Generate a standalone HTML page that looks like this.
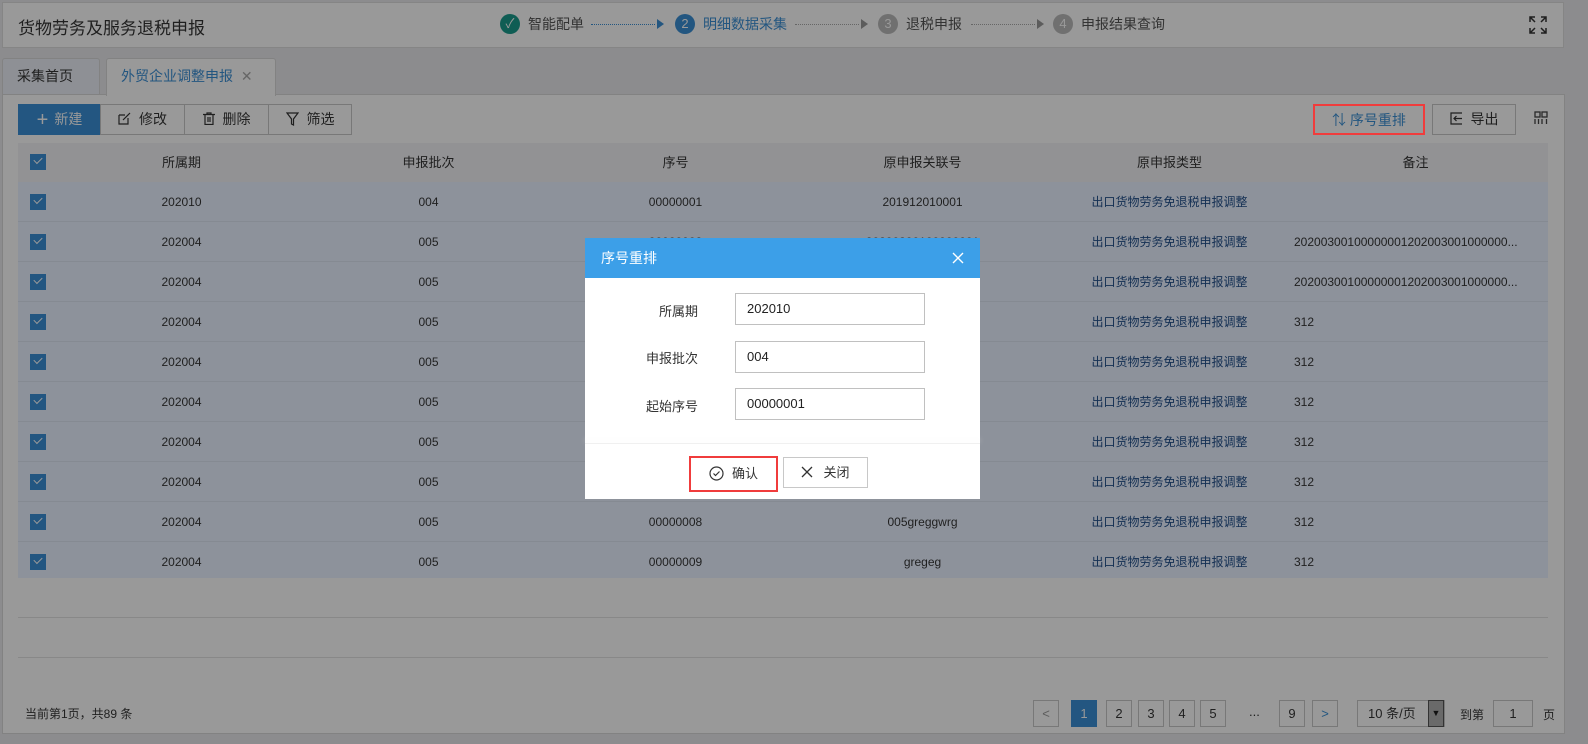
<!DOCTYPE html>
<html><head><meta charset="utf-8"><style>
*{box-sizing:border-box;margin:0;padding:0}
body{width:1588px;height:744px;position:relative;overflow:hidden;background:#8c8c8e;font-family:"Liberation Sans","Noto Sans CJK SC",sans-serif;font-size:12px;color:#1f1f1f}
.a{position:absolute}
.hdr{left:2px;top:2px;width:1562px;height:46px;background:#999;border:1px solid #858585}
.step{top:14px;height:20px;line-height:20px;font-size:14px;color:#333}
.circ{display:inline-block;width:20px;height:20px;border-radius:50%;color:#999;text-align:center;font-size:13px;line-height:20px;vertical-align:top;margin-right:8px}
.dots{top:24px;border-top:1px dotted #235680;width:64px}
.tab{top:58px;height:37px;border:1px solid #828282;border-bottom:none;background:#8e9095;font-size:14px;line-height:34px;padding:0 14px;border-radius:3px 3px 0 0}
.panel{left:2px;top:94px;width:1563px;height:640px;background:#999;border:1px solid #828282}
.btn{top:104px;height:31px;border:1px solid #787878;background:#999;font-size:14px;line-height:29px;text-align:center;color:#1f1f1f}
.th{top:143px;height:39px;left:18px;width:1530px;background:#929294}
.cell{position:absolute;text-align:center;width:247px;line-height:40px;height:40px}
.row{position:absolute;left:18px;width:1530px;height:40px;background:#8d929b;border-bottom:1px solid #858a92}
.cb{position:absolute;left:12px;top:12px;width:16px;height:16px;background:#235681}
.cb:after{content:"";position:absolute;left:4px;top:3px;width:7px;height:4px;border-left:1.5px solid #999;border-bottom:1.5px solid #999;transform:rotate(-45deg)}
.pg{top:700px;width:26px;height:27px;border:1px solid #787878;background:#999;text-align:center;line-height:25px;font-size:13px}
.dlg{left:585px;top:238px;width:395px;height:261px;background:#fff;color:#333}
.lbl{width:113px;text-align:right;font-size:13px;left:0}
.inp{left:150px;width:190px;height:32px;border:1px solid #c0c0c0;line-height:30px;padding-left:11px;font-size:13px;color:#222}
</style></head><body>
<div class="a hdr"></div>
<div class="a" style="left:18px;top:14px;font-size:17px;color:#1f1f1f">货物劳务及服务退税申报</div>
<div class="a step" style="left:500px"><span class="circ" style="background:#0f5d54">✓</span>智能配单</div>
<div class="a dots" style="left:591px"></div><div class="a" style="left:657px;top:19px;border-left:7px solid #235680;border-top:5px solid transparent;border-bottom:5px solid transparent"></div>
<div class="a step" style="left:675px;color:#235680"><span class="circ" style="background:#235680">2</span>明细数据采集</div>
<div class="a dots" style="left:795px;border-color:#666"></div><div class="a" style="left:861px;top:19px;border-left:7px solid #5c5c5c;border-top:5px solid transparent;border-bottom:5px solid transparent"></div>
<div class="a step" style="left:878px"><span class="circ" style="background:#707070">3</span>退税申报</div>
<div class="a dots" style="left:971px;border-color:#666"></div><div class="a" style="left:1037px;top:19px;border-left:7px solid #5c5c5c;border-top:5px solid transparent;border-bottom:5px solid transparent"></div>
<div class="a step" style="left:1053px"><span class="circ" style="background:#707070">4</span>申报结果查询</div>
<svg class="a" style="left:1529px;top:16px" width="18" height="18" viewBox="0 0 18 18" fill="none" stroke="#1f1f1f" stroke-width="1.5"><path d="M1 6V1h5M1 1l5 5M12 1h5v5M17 1l-5 5M1 12v5h5M1 17l5-5M17 12v5h-5M17 17l-5-5"/></svg>

<div class="a tab" style="left:2px;width:98px;">采集首页</div>
<div class="a tab" style="left:106px;width:170px;background:#999;color:#235680;height:38px;z-index:2">外贸企业调整申报 <span style="color:#666;margin-left:4px">✕</span></div>
<div class="a panel"></div>

<div class="a btn" style="left:18px;width:83px;background:#235681;border-color:#235681;color:#999"><span style="font-size:20px;vertical-align:-2px;margin-right:6px">+</span>新建</div>
<div class="a btn" style="left:100px;width:85px"><svg width="13" height="13" style="vertical-align:-1px;margin-right:8px" fill="none" stroke="#1f1f1f" stroke-width="1.2"><path d="M1 3h6M1 3v9h9V6M5 8l7-7"/></svg>修改</div>
<div class="a btn" style="left:184px;width:85px"><svg width="12" height="13" style="vertical-align:-1px;margin-right:8px" fill="none" stroke="#1f1f1f" stroke-width="1.2"><path d="M0 2.5h12M4 2.5V1h4v1.5M2 2.5v10h8v-10M5 5v5M7 5v5"/></svg>删除</div>
<div class="a btn" style="left:268px;width:84px"><svg width="13" height="14" style="vertical-align:-2px;margin-right:8px" fill="none" stroke="#1f1f1f" stroke-width="1.2"><path d="M1 1h11L7.5 7v6l-2-1V7z"/></svg>筛选</div>
<div class="a btn" style="left:1313px;width:112px;color:#235680;border:2px solid #f03c3c">⇅ 序号重排</div>
<div class="a btn" style="left:1432px;width:84px"><svg width="13" height="13" style="vertical-align:-1px;margin-right:8px" fill="none" stroke="#1f1f1f" stroke-width="1.2"><path d="M12 1H1v11h11M4 6.5h8M6.5 4L4 6.5 6.5 9"/></svg>导出</div>
<svg class="a" style="left:1534px;top:111px" width="14" height="14" fill="none" stroke="#2a2a2a" stroke-width="1.3"><rect x="1" y="1" width="5" height="5"/><rect x="8" y="1" width="5" height="5"/><path d="M1 8v5M4.5 8v5M8 8v5M12.5 8v5"/></svg>

<div class="a th">
<div class="cb" style="top:11px"></div>
<div class="cell" style="left:40px;font-size:13px">所属期</div>
<div class="cell" style="left:287px;font-size:13px">申报批次</div>
<div class="cell" style="left:534px;font-size:13px">序号</div>
<div class="cell" style="left:781px;font-size:13px">原申报关联号</div>
<div class="cell" style="left:1028px;font-size:13px">原申报类型</div>
<div class="cell" style="left:1274px;font-size:13px">备注</div>
</div>

<div class="row" style="top:182px"><div class="cb"></div><div class="cell" style="left:40px">202010</div><div class="cell" style="left:287px">004</div><div class="cell" style="left:534px">00000001</div><div class="cell" style="left:781px">201912010001</div><div class="cell" style="left:1028px;color:#132f53">出口货物劳务免退税申报调整</div></div>
<div class="row" style="top:222px"><div class="cb"></div><div class="cell" style="left:40px">202004</div><div class="cell" style="left:287px">005</div><div class="cell" style="left:534px">00000002</div><div class="cell" style="left:781px">20200300100000001</div><div class="cell" style="left:1028px;color:#132f53">出口货物劳务免退税申报调整</div><div class="cell" style="left:1276px;width:250px;text-align:left;overflow:hidden;white-space:nowrap">20200300100000001202003001000000...</div></div>
<div class="row" style="top:262px"><div class="cb"></div><div class="cell" style="left:40px">202004</div><div class="cell" style="left:287px">005</div><div class="cell" style="left:1028px;color:#132f53">出口货物劳务免退税申报调整</div><div class="cell" style="left:1276px;width:250px;text-align:left;overflow:hidden;white-space:nowrap">20200300100000001202003001000000...</div></div>
<div class="row" style="top:302px"><div class="cb"></div><div class="cell" style="left:40px">202004</div><div class="cell" style="left:287px">005</div><div class="cell" style="left:1028px;color:#132f53">出口货物劳务免退税申报调整</div><div class="cell" style="left:1276px;text-align:left">312</div></div>
<div class="row" style="top:342px"><div class="cb"></div><div class="cell" style="left:40px">202004</div><div class="cell" style="left:287px">005</div><div class="cell" style="left:1028px;color:#132f53">出口货物劳务免退税申报调整</div><div class="cell" style="left:1276px;text-align:left">312</div></div>
<div class="row" style="top:382px"><div class="cb"></div><div class="cell" style="left:40px">202004</div><div class="cell" style="left:287px">005</div><div class="cell" style="left:1028px;color:#132f53">出口货物劳务免退税申报调整</div><div class="cell" style="left:1276px;text-align:left">312</div></div>
<div class="row" style="top:422px"><div class="cb"></div><div class="cell" style="left:40px">202004</div><div class="cell" style="left:287px">005</div><div class="cell" style="left:1028px;color:#132f53">出口货物劳务免退税申报调整</div><div class="cell" style="left:1276px;text-align:left">312</div></div>
<div class="row" style="top:462px"><div class="cb"></div><div class="cell" style="left:40px">202004</div><div class="cell" style="left:287px">005</div><div class="cell" style="left:1028px;color:#132f53">出口货物劳务免退税申报调整</div><div class="cell" style="left:1276px;text-align:left">312</div></div>
<div class="row" style="top:502px"><div class="cb"></div><div class="cell" style="left:40px">202004</div><div class="cell" style="left:287px">005</div><div class="cell" style="left:534px">00000008</div><div class="cell" style="left:781px">005greggwrg</div><div class="cell" style="left:1028px;color:#132f53">出口货物劳务免退税申报调整</div><div class="cell" style="left:1276px;text-align:left">312</div></div>
<div class="row" style="top:542px;height:36px;border:none"><div class="cb"></div><div class="cell" style="left:40px">202004</div><div class="cell" style="left:287px">005</div><div class="cell" style="left:534px">00000009</div><div class="cell" style="left:781px">gregeg</div><div class="cell" style="left:1028px;color:#132f53">出口货物劳务免退税申报调整</div><div class="cell" style="left:1276px;text-align:left">312</div></div>
<div class="a" style="left:18px;top:617px;width:1530px;border-top:1px solid #888"></div>
<div class="a" style="left:18px;top:657px;width:1530px;border-top:1px solid #888"></div>
<div class="a" style="left:25px;top:705px;font-size:12px">当前第1页，共89 条</div>

<div class="a pg" style="left:1033px;color:#5c5c5c">&lt;</div>
<div class="a pg" style="left:1071px;background:#235681;border-color:#235681;color:#999">1</div>
<div class="a pg" style="left:1106px">2</div>
<div class="a pg" style="left:1138px">3</div>
<div class="a pg" style="left:1169px">4</div>
<div class="a pg" style="left:1200px">5</div>
<div class="a" style="left:1249px;top:704px;font-size:13px">...</div>
<div class="a pg" style="left:1279px">9</div>
<div class="a pg" style="left:1312px;color:#235680">&gt;</div>
<div class="a pg" style="left:1357px;width:88px;text-align:left;padding-left:10px">10 条/页</div>
<div class="a" style="left:1428px;top:700px;width:16px;height:27px;background:#6a6a6a;border:1px solid #333;color:#111;font-size:9px;text-align:center;line-height:25px">▼</div>
<div class="a" style="left:1460px;top:706px;font-size:12px">到第</div>
<div class="a pg" style="left:1493px;width:40px">1</div>
<div class="a" style="left:1543px;top:706px;font-size:12px">页</div>

<div class="a dlg">
<div class="a" style="left:0;top:0;width:395px;height:40px;background:#3c9fe8;color:#fff;font-size:14px;line-height:40px;padding-left:16px">序号重排<svg style="position:absolute;right:16px;top:14px" width="12" height="12" stroke="#fff" stroke-width="1.4"><path d="M1 1l10 10M11 1L1 11"/></svg></div>
<div class="a lbl" style="top:63px">所属期</div><div class="a inp" style="top:55px">202010</div>
<div class="a lbl" style="top:110px">申报批次</div><div class="a inp" style="top:103px">004</div>
<div class="a lbl" style="top:158px">起始序号</div><div class="a inp" style="top:150px">00000001</div>
<div class="a" style="left:0;top:205px;width:395px;height:1px;background:#f0f0f0;box-shadow:0 -3px 6px #f2f2f2"></div>
<div class="a" style="left:104px;top:218px;width:89px;height:36px;border:2px solid #f03c3c;text-align:center;line-height:32px;font-size:13px"><svg width="15" height="15" style="vertical-align:-3px;margin-right:8px" fill="none" stroke="#333" stroke-width="1.2"><circle cx="7.5" cy="7.5" r="6.5"/><path d="M4.5 7.5l2 2 4-4"/></svg>确认</div>
<div class="a" style="left:198px;top:219px;width:85px;height:31px;border:1px solid #c8c8c8;text-align:center;line-height:29px;font-size:13px"><svg width="12" height="12" style="vertical-align:-1px;margin-right:10px" stroke="#333" stroke-width="1.3"><path d="M1 1l10 10M11 1L1 11"/></svg>关闭</div>
</div>
</body></html>
